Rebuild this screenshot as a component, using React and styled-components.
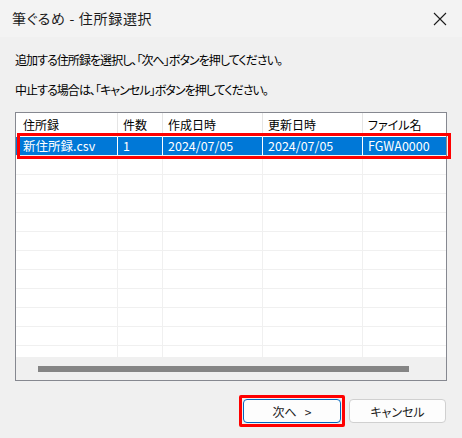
import React from "react";
import styled, { createGlobalStyle } from "styled-components";

const Global = createGlobalStyle`
  html, body { margin: 0; padding: 0; background: #f0f0f0; }
  body {
    font-family: "Noto Sans CJK JP", "Noto Sans", sans-serif;
    font-feature-settings: "palt";
    color: #000;
  }
`;

const Window = styled.div`
  width: 462px;
  height: 438px;
  background: #f0f0f0;
  display: flex;
  flex-direction: column;
  overflow: hidden;
`;

const TitleBar = styled.div`
  height: 37px;
  flex: none;
  background: #f3f3f3;
  display: flex;
  align-items: center;
  justify-content: space-between;
  padding: 0 15px 0 12px;
  box-sizing: border-box;
`;

const Title = styled.div`
  font-size: 14px;
  letter-spacing: 0.7px;
  color: #1b1b1b;
  padding-bottom: 2px;
`;

const CloseIcon = styled.svg`
  width: 14px;
  height: 14px;
  margin-top: 1px;
`;

const Body = styled.div`
  display: flex;
  flex-direction: column;
  padding: 15px 15px 0 15px;
`;

const Message = styled.p`
  margin: 0 0 ${(p) => p.$gap}px 0;
  font-size: 12px;
  line-height: 16px;
  letter-spacing: -0.95px;
  white-space: nowrap;
`;

const TableFrame = styled.div`
  position: relative;
  width: 432px;
  height: 269px;
  box-sizing: border-box;
  border: 1px solid #868890;
  background: #fff;
  display: flex;
  flex-direction: column;
`;

const Grid = styled.div`
  height: 244px;
  overflow: hidden;
  display: flex;
  flex-direction: column;
`;

const Row = styled.div`
  display: grid;
  grid-template-columns: 102px 45px 100px 100px 1fr;
  height: ${(p) => (p.$header ? 24 : 19)}px;
  flex: none;
  box-sizing: border-box;
  border-bottom: ${(p) => (p.$header ? "none" : "1px solid #f0f0f0")};
  background: ${(p) => (p.$selected ? "#0078d7" : "#fff")};
  color: ${(p) => (p.$selected ? "#fff" : "#000")};
`;

const Cell = styled.div`
  box-sizing: border-box;
  border-right: 1px solid
    ${(p) => (p.$selected ? "#ffffff" : p.$header ? "#e5e5e5" : "#f0f0f0")};
  padding-left: ${(p) => (p.$first ? 7 : 5)}px;
  line-height: 18px;
  display: flex;
  align-items: center;
  white-space: nowrap;
  overflow: hidden;
  font-size: ${(p) => (p.$header ? 12 : 12.5)}px;
  &:last-child { border-right: none; }
`;

const ScrollArea = styled.div`
  flex: 1;
  background: #f0f0f0;
  padding: 9px 0 0 22px;
  box-sizing: border-box;
`;

const Thumb = styled.div`
  width: 371px;
  height: 6px;
  background: #858585;
`;

const Highlight = styled.div`
  position: absolute;
  border: 3px solid #ff0000;
  box-sizing: border-box;
  pointer-events: none;
`;

const RowHighlight = styled(Highlight)`
  left: 1px;
  top: 20px;
  width: 434px;
  height: 26px;
`;

const ButtonBar = styled.div`
  display: flex;
  justify-content: flex-end;
  gap: 8px;
  padding: 18px 1px 0 0;
`;

const ButtonWrap = styled.div`
  position: relative;
`;

const ButtonHighlight = styled(Highlight)`
  inset: -4px;
  border-radius: 2px;
`;

const Button = styled.button`
  width: ${(p) => p.$w}px;
  height: 24px;
  box-sizing: border-box;
  border-radius: 4px;
  background: #fdfdfd;
  border: 1px solid ${(p) => (p.$primary ? "#0067c0" : "#d0d0d0")};
  font-family: "Noto Sans CJK JP", "Noto Sans", sans-serif;
  font-feature-settings: "palt";
  font-size: 12px;
  color: #1b1b1b;
  padding: 0;
  white-space: pre;
  display: flex;
  align-items: center;
  justify-content: center;
`;

const columns = ["住所録", "件数", "作成日時", "更新日時", "ファイル名"];
const data = [["新住所録.csv", "1", "2024/07/05", "2024/07/05", "FGWA0000"]];
const emptyRows = 11;

export default function App() {
  return (
    <>
      <Global />
      <Window>
        <TitleBar>
          <Title>筆ぐるめ - 住所録選択</Title>
          <CloseIcon viewBox="0 0 14 14">
            <path d="M1 1 L13 13 M13 1 L1 13" stroke="#1b1b1b" strokeWidth="1.1" fill="none" />
          </CloseIcon>
        </TitleBar>
        <Body>
          <Message $gap={14}>追加する住所録を選択し、「次へ」ボタンを押してください。</Message>
          <Message $gap={14}>中止する場合は、「キャンセル」ボタンを押してください。</Message>
          <TableFrame>
            <Grid>
              <Row $header>
                {columns.map((c, i) => (
                  <Cell key={c} $header $first={i === 0}>{c}</Cell>
                ))}
              </Row>
              {data.map((r, ri) => (
                <Row key={ri} $selected>
                  {r.map((v, i) => (
                    <Cell key={i} $selected $first={i === 0}>{v}</Cell>
                  ))}
                </Row>
              ))}
              {Array.from({ length: emptyRows }).map((_, ri) => (
                <Row key={"e" + ri}>
                  {columns.map((c, i) => (
                    <Cell key={c} $first={i === 0} />
                  ))}
                </Row>
              ))}
            </Grid>
            <ScrollArea>
              <Thumb />
            </ScrollArea>
            <RowHighlight />
          </TableFrame>
          <ButtonBar>
            <ButtonWrap>
              <Button $primary $w={98}>{"次へ   >"}</Button>
              <ButtonHighlight />
            </ButtonWrap>
            <ButtonWrap>
              <Button $w={97}>キャンセル</Button>
            </ButtonWrap>
          </ButtonBar>
        </Body>
      </Window>
    </>
  );
}
